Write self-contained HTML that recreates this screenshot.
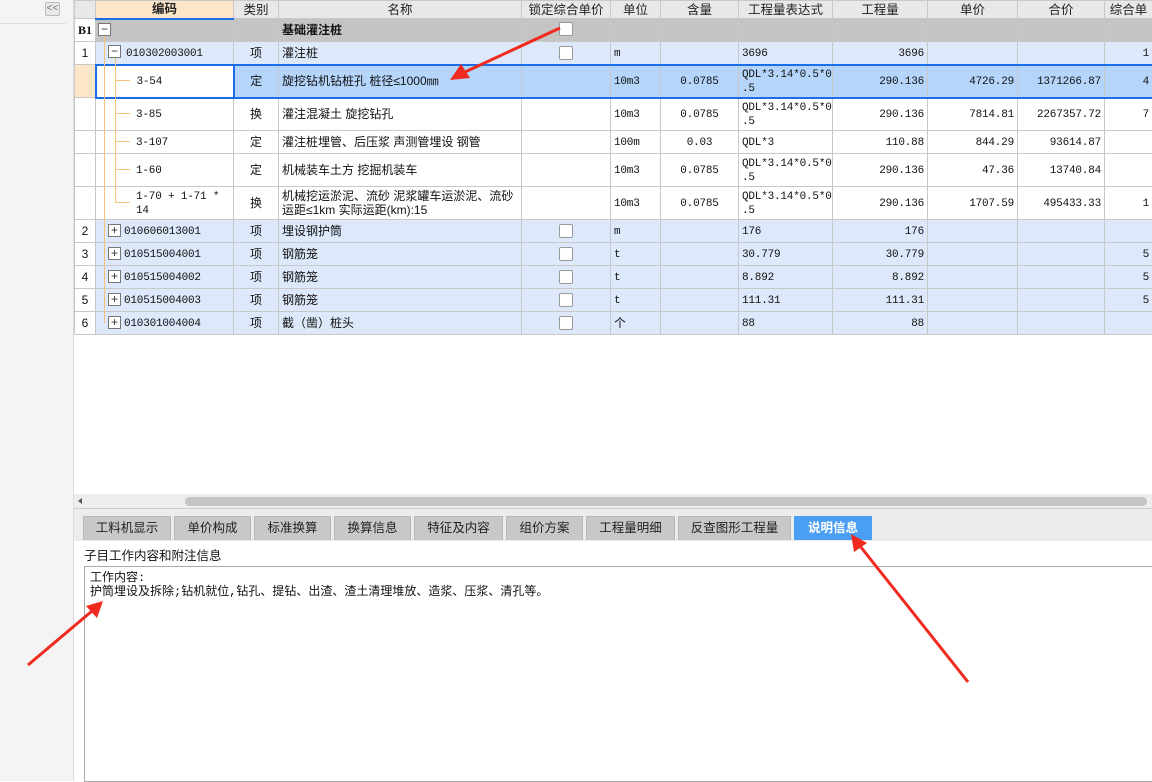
<!DOCTYPE html>
<html><head><meta charset="utf-8"><style>
*{margin:0;padding:0;box-sizing:border-box}
body{width:1152px;height:781px;overflow:hidden;background:#fff;font-family:"Liberation Sans","Noto Sans CJK SC",sans-serif;font-size:12px;color:#111;position:relative}
.a{position:absolute}
table{position:absolute;left:74px;top:0;border-collapse:collapse;table-layout:fixed;width:1078px}
td{border:1px solid #c8c8c8;padding:0 3px;white-space:nowrap;overflow:hidden;font-size:12px;line-height:14px;vertical-align:middle}
th{border:1px solid #c8c8c8;background:#e8e8e8;font-weight:normal;font-size:12.5px;height:18px;line-height:16px;color:#222;overflow:hidden;white-space:nowrap}
.m{font-family:"Liberation Mono","Noto Sans CJK SC",monospace;font-size:11px;letter-spacing:-0.2px;padding-top:2px}
.c{text-align:center}.r{text-align:right}
tr.h td{height:23px}
tr.t td{height:33px}
tr.b1 td{background:#c4c4c4;height:23px}
tr.it td{background:#dde9fb}
tr.it td:first-child,tr.w td:first-child{background:#fff}
tr.sel td{background:#b5d5fb;border-top:2px solid #1a6fe8;border-bottom:2px solid #1a6fe8}
tr.sel td:first-child{background:#fde6c8;border-top:1px solid #c8c8c8;border-bottom:1px solid #c8c8c8}
.cb{display:inline-block;width:14px;height:14px;border:1px solid #999;background:#fff;border-radius:2px;vertical-align:middle}
.bx{position:absolute;width:13px;height:13px;border:1px solid #777;background:#fff;font-size:12px;line-height:10px;text-align:center;color:#333}
.tab{position:absolute;top:516px;height:24px;background:#c8c8c8;border:1px solid #b8b8b8;border-bottom:none;text-align:center;line-height:23px;font-size:12.5px;color:#222}
</style></head><body>
<div class="a" style="left:0;top:0;width:74px;height:781px;background:#f4f4f4;border-right:1px solid #ddd"></div>
<div class="a" style="left:0;top:23px;width:66px;height:1px;background:#ddd"></div>
<div class="a" style="left:45px;top:2px;width:15px;height:14px;border:1px solid #bbb;border-radius:2px;background:#e8e8e8;font-size:10px;line-height:12px;text-align:center;color:#777">&lt;&lt;</div>
<table>
<colgroup><col style="width:21px"><col style="width:138px"><col style="width:45px"><col style="width:243px"><col style="width:89px"><col style="width:50px"><col style="width:78px"><col style="width:94px"><col style="width:95px"><col style="width:90px"><col style="width:87px"><col style="width:48px"></colgroup>
<tr><th></th><th style="background:#fde6c8;font-weight:bold;border-bottom:2px solid #1a6fe8">编码</th><th>类别</th><th>名称</th><th>锁定综合单价</th><th>单位</th><th>含量</th><th>工程量表达式</th><th>工程量</th><th>单价</th><th>合价</th><th>综合单</th></tr>
<tr class="b1"><td style="background:#fff;font-weight:bold;font-family:'Liberation Serif',serif" class="c">B1</td><td></td><td></td><td style="font-weight:bold">基础灌注桩</td><td></td><td></td><td></td><td></td><td></td><td></td><td></td><td></td></tr>
<tr class="h it"><td class="c">1</td><td class="m" style="padding-left:30px">010302003001</td><td class="c">项</td><td>灌注桩</td><td class="c"><span class="cb"></span></td><td class="m">m</td><td></td><td class="m">3696</td><td class="r m">3696</td><td></td><td></td><td class="r m">1</td></tr>
<tr class="t sel"><td></td><td class="m" style="padding-left:40px;border-left:2px solid #1a6fe8;border-right:2px solid #1a6fe8;background:#fff">3-54</td><td class="c">定</td><td>旋挖钻机钻桩孔 桩径≤1000㎜</td><td></td><td class="m">10m3</td><td class="c m">0.0785</td><td class="m">QDL*3.14*0.5*0<br>.5</td><td class="r m">290.136</td><td class="r m">4726.29</td><td class="r m">1371266.87</td><td class="r m">4</td></tr>
<tr class="t w"><td></td><td class="m" style="padding-left:40px">3-85</td><td class="c">换</td><td>灌注混凝土 旋挖钻孔</td><td></td><td class="m">10m3</td><td class="c m">0.0785</td><td class="m">QDL*3.14*0.5*0<br>.5</td><td class="r m">290.136</td><td class="r m">7814.81</td><td class="r m">2267357.72</td><td class="r m">7</td></tr>
<tr class="h w"><td></td><td class="m" style="padding-left:40px">3-107</td><td class="c">定</td><td>灌注桩埋管、后压浆 声测管埋设 钢管</td><td></td><td class="m">100m</td><td class="c m">0.03</td><td class="m">QDL*3</td><td class="r m">110.88</td><td class="r m">844.29</td><td class="r m">93614.87</td><td></td></tr>
<tr class="t w"><td></td><td class="m" style="padding-left:40px">1-60</td><td class="c">定</td><td>机械装车土方 挖掘机装车</td><td></td><td class="m">10m3</td><td class="c m">0.0785</td><td class="m">QDL*3.14*0.5*0<br>.5</td><td class="r m">290.136</td><td class="r m">47.36</td><td class="r m">13740.84</td><td></td></tr>
<tr class="t w"><td></td><td class="m" style="padding-left:40px">1-70 + 1-71 *<br>14</td><td class="c">换</td><td>机械挖运淤泥、流砂 泥浆罐车运淤泥、流砂<br>运距≤1km  实际运距(km):15</td><td></td><td class="m">10m3</td><td class="c m">0.0785</td><td class="m">QDL*3.14*0.5*0<br>.5</td><td class="r m">290.136</td><td class="r m">1707.59</td><td class="r m">495433.33</td><td class="r m">1</td></tr>
<tr class="h it"><td class="c">2</td><td class="m" style="padding-left:28px">010606013001</td><td class="c">项</td><td>埋设钢护筒</td><td class="c"><span class="cb"></span></td><td class="m">m</td><td></td><td class="m">176</td><td class="r m">176</td><td></td><td></td><td></td></tr>
<tr class="h it"><td class="c">3</td><td class="m" style="padding-left:28px">010515004001</td><td class="c">项</td><td>钢筋笼</td><td class="c"><span class="cb"></span></td><td class="m">t</td><td></td><td class="m">30.779</td><td class="r m">30.779</td><td></td><td></td><td class="r m">5</td></tr>
<tr class="h it"><td class="c">4</td><td class="m" style="padding-left:28px">010515004002</td><td class="c">项</td><td>钢筋笼</td><td class="c"><span class="cb"></span></td><td class="m">t</td><td></td><td class="m">8.892</td><td class="r m">8.892</td><td></td><td></td><td class="r m">5</td></tr>
<tr class="h it"><td class="c">5</td><td class="m" style="padding-left:28px">010515004003</td><td class="c">项</td><td>钢筋笼</td><td class="c"><span class="cb"></span></td><td class="m">t</td><td></td><td class="m">111.31</td><td class="r m">111.31</td><td></td><td></td><td class="r m">5</td></tr>
<tr class="h it"><td class="c">6</td><td class="m" style="padding-left:28px">010301004004</td><td class="c">项</td><td>截（凿）桩头</td><td class="c"><span class="cb"></span></td><td>个</td><td></td><td class="m">88</td><td class="r m">88</td><td></td><td></td><td></td></tr>
</table>
<div class="a" style="left:559px;top:22px;width:14px;height:14px;border:1px solid #999;background:#fff;border-radius:2px"></div>
<div class="a" style="left:104px;top:36px;width:1px;height:287px;background:#f5c27a"></div>
<div class="a" style="left:115px;top:57px;width:1px;height:146px;background:#f5c27a"></div>
<div class="a" style="left:115px;top:80px;width:15px;height:1px;background:#f5c27a"></div>
<div class="a" style="left:115px;top:113px;width:15px;height:1px;background:#f5c27a"></div>
<div class="a" style="left:115px;top:141px;width:15px;height:1px;background:#f5c27a"></div>
<div class="a" style="left:115px;top:169px;width:15px;height:1px;background:#f5c27a"></div>
<div class="a" style="left:115px;top:202px;width:15px;height:1px;background:#f5c27a"></div>
<div class="bx" style="left:98px;top:23px">−</div>
<div class="bx" style="left:108px;top:45px">−</div>
<div class="bx" style="left:108px;top:224px">+</div>
<div class="bx" style="left:108px;top:247px">+</div>
<div class="bx" style="left:108px;top:270px">+</div>
<div class="bx" style="left:108px;top:293px">+</div>
<div class="bx" style="left:108px;top:316px">+</div>
<div class="a" style="left:74px;top:494px;width:1078px;height:14px;background:#ededed"></div>
<div class="a" style="left:78px;top:498px;width:0;height:0;border-top:3px solid transparent;border-bottom:3px solid transparent;border-right:4px solid #555"></div>
<div class="a" style="left:185px;top:497px;width:962px;height:9px;background:#c4c4c4;border-radius:5px"></div>
<div class="a" style="left:74px;top:508px;width:1078px;height:33px;background:#ececec;border-top:1px solid #ccc"></div>
<div class="tab" style="left:83px;width:88px">工料机显示</div>
<div class="tab" style="left:174px;width:77px">单价构成</div>
<div class="tab" style="left:254px;width:77px">标准换算</div>
<div class="tab" style="left:334px;width:77px">换算信息</div>
<div class="tab" style="left:414px;width:89px">特征及内容</div>
<div class="tab" style="left:506px;width:77px">组价方案</div>
<div class="tab" style="left:586px;width:89px">工程量明细</div>
<div class="tab" style="left:678px;width:113px">反查图形工程量</div>
<div class="tab" style="left:794px;width:78px;background:#4a9ff5;border-color:#4a9ff5;color:#fff;font-weight:bold">说明信息</div>
<div class="a" style="left:84px;top:545px;font-size:12.5px">子目工作内容和附注信息</div>
<div class="a" style="left:84px;top:566px;width:1070px;height:216px;border:1px solid #aaa;padding:4px 5px;font-size:12px;line-height:14px;font-family:'Liberation Mono','Noto Sans CJK SC',monospace">工作内容:<br>护筒埋设及拆除;钻机就位,钻孔、提钻、出渣、渣土清理堆放、造浆、压浆、清孔等。</div>
<svg class="a" style="left:0;top:0" width="1152" height="781">
<g stroke="#f02a1e" stroke-width="3" fill="#f02a1e">
<line x1="560" y1="28" x2="465" y2="72"/>
<polygon points="450,80 461,64 470,78" stroke="none"/>
<line x1="28" y1="665" x2="92" y2="611"/>
<polygon points="103,601 97,618 86,606" stroke="none"/>
<line x1="968" y1="682" x2="860" y2="546"/>
<polygon points="851,534 867,543 854,552" stroke="none"/>
</g></svg>
</body></html>
